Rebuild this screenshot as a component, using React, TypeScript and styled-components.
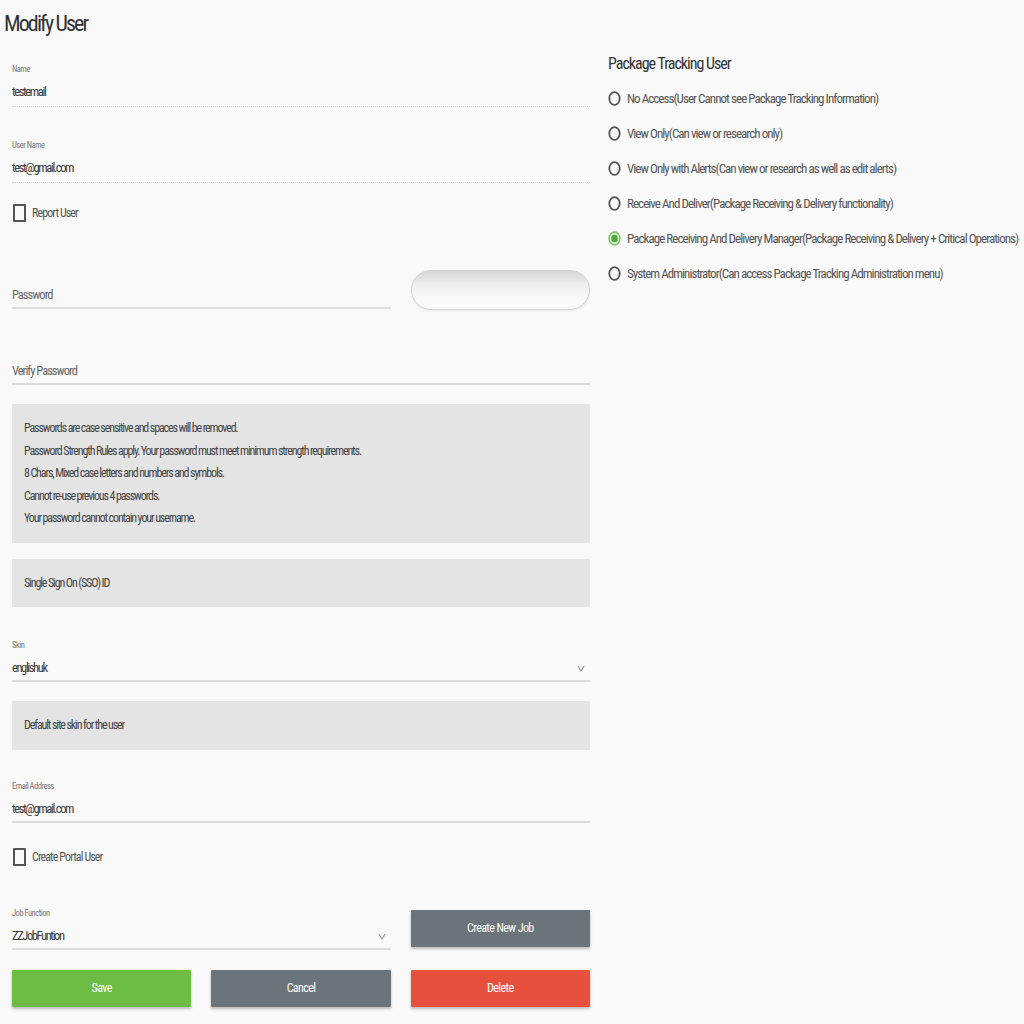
import React from "react";
import styled, { createGlobalStyle } from "styled-components";

const GlobalStyle = createGlobalStyle`
  html, body {
    margin: 0;
    padding: 0;
    background: #f9f9f9;
  }
  body {
    font-family: "Roboto Condensed", Roboto, "Liberation Sans", sans-serif;
    color: #444;
  }
`;

const Page = styled.div`
  width: 1024px;
  min-height: 1024px;
  background: #f9f9f9;
  box-sizing: border-box;
  overflow: hidden;
`;

const Title = styled.h1`
  margin: 0;
  padding: 9px 0 0 4px;
  font-size: 22px;
  line-height: 30px;
  font-weight: 400;
  letter-spacing: -1.9px;
  color: #333;
`;

const Columns = styled.div`
  display: flex;
  gap: 18px;
  padding-left: 12px;
`;

const LeftCol = styled.div`
  width: 578px;
  flex-shrink: 0;
  display: flex;
  flex-direction: column;
`;

const RightCol = styled.div`
  flex: 1;
  min-width: 0;
  padding-top: 15px;
`;

const Field = styled.div<{ $top: number }>`
  margin-top: ${(p) => p.$top}px;
`;

const Label = styled.div`
  font-size: 8.5px;
  line-height: 12px;
  color: #777;
  letter-spacing: -0.5px;
`;

const Value = styled.div<{ $thin?: boolean }>`
  position: relative;
  margin-top: 7px;
  font-size: 12.5px;
  line-height: 20px;
  letter-spacing: -1.4px;
  color: #3a3a3a;
  padding-bottom: ${(p) => (p.$thin ? 4 : 2)}px;
  border-bottom: ${(p) => (p.$thin ? "1px dotted #d6d6d6" : "2px solid #dcdcdc")};
`;

const Placeholder = styled.div`
  font-size: 12.5px;
  line-height: 20px;
  letter-spacing: -1px;
  color: #666;
  padding-bottom: 2px;
  border-bottom: 2px solid #dcdcdc;
`;

const Chevron = styled.svg`
  position: absolute;
  right: 5px;
  top: 7px;
`;

const CheckRow = styled.label<{ $top: number }>`
  display: flex;
  align-items: center;
  gap: 6px;
  margin-top: ${(p) => p.$top}px;
  height: 18px;
  font-size: 12px;
  letter-spacing: -0.9px;
  color: #555;
`;

const CheckBox = styled.span`
  display: inline-block;
  width: 9px;
  height: 14px;
  border: 2px solid #555;
  border-radius: 1px;
  margin-left: 1px;
`;

const Grid3 = styled.div<{ $top: number; $align?: string }>`
  display: grid;
  grid-template-columns: repeat(3, 1fr);
  column-gap: 20px;
  align-items: ${(p) => p.$align ?? "end"};
  margin-top: ${(p) => p.$top}px;
`;

const Span2 = styled.div`
  grid-column: span 2;
`;

const Pill = styled.div`
  height: 38px;
  border-radius: 20px;
  border: 1px solid #d2d2d2;
  background: linear-gradient(#d6d6d6 0%, #eeeeee 35%, #f8f8f8 70%, #fbfbfb 100%);
  box-shadow: 0 1px 2px rgba(0, 0, 0, 0.08);
  margin-bottom: -1px;
`;

const InfoBox = styled.div<{ $top: number; $pad: number }>`
  margin-top: ${(p) => p.$top}px;
  background: #e4e4e4;
  padding: ${(p) => p.$pad}px 12px;
  font-size: 12px;
  line-height: 22.5px;
  letter-spacing: -1.12px;
  color: #444;
`;

const Button = styled.button<{ $color: string }>`
  height: 37px;
  border: none;
  border-radius: 1px;
  background: ${(p) => p.$color};
  color: #fff;
  font-family: "Roboto Condensed", Roboto, sans-serif;
  font-size: 12px;
  letter-spacing: -0.6px;
  box-shadow: 0 2px 3px rgba(0, 0, 0, 0.25);
  cursor: pointer;
`;

const SectionTitle = styled.h2`
  margin: 0;
  font-size: 16px;
  line-height: 20px;
  font-weight: 400;
  letter-spacing: -1px;
  color: #333;
`;

const RadioList = styled.div`
  margin-top: 7px;
  display: flex;
  flex-direction: column;
`;

const RadioRow = styled.div`
  display: flex;
  align-items: center;
  gap: 6px;
  height: 35px;
  font-size: 13px;
  letter-spacing: -0.95px;
  color: #555;
  white-space: nowrap;
`;

const ChevronIcon = () => (
  <Chevron width="8" height="7" viewBox="0 0 8 7">
    <polyline points="1,1 4,6 7,1" fill="none" stroke="#999" strokeWidth="1.2" />
  </Chevron>
);

const RadioIcon = ({ checked }: { checked?: boolean }) =>
  checked ? (
    <svg width="13" height="15" viewBox="0 0 13 15">
      <ellipse cx="6.5" cy="7.5" rx="5.5" ry="6.5" fill="#d8eecf" stroke="#79c35d" strokeWidth="1.4" />
      <ellipse cx="6.5" cy="7.5" rx="3.2" ry="3.8" fill="#4fa83a" />
    </svg>
  ) : (
    <svg width="13" height="15" viewBox="0 0 13 15">
      <ellipse cx="6.5" cy="7.5" rx="5.2" ry="6.3" fill="none" stroke="#555" strokeWidth="1.8" />
    </svg>
  );

const roles = [
  "No Access(User Cannot see Package Tracking Information)",
  "View Only(Can view or research only)",
  "View Only with Alerts(Can view or research as well as edit alerts)",
  "Receive And Deliver(Package Receiving & Delivery functionality)",
  "Package Receiving And Delivery Manager(Package Receiving & Delivery + Critical Operations)",
  "System Administrator(Can access Package Tracking Administration menu)",
];

const passwordRules = [
  "Passwords are case sensitive and spaces will be removed.",
  "Password Strength Rules apply. Your password must meet minimum strength requirements.",
  "8 Chars, Mixed case letters and numbers and symbols.",
  "Cannot re-use previous 4 passwords.",
  "Your password cannot contain your username.",
];

export default function App() {
  return (
    <Page>
      <GlobalStyle />
      <Title>Modify User</Title>
      <Columns>
        <LeftCol>
          <Field $top={24}>
            <Label>Name</Label>
            <Value $thin>testemail</Value>
          </Field>
          <Field $top={32}>
            <Label>User Name</Label>
            <Value $thin>test@gmail.com</Value>
          </Field>
          <CheckRow $top={21}>
            <CheckBox />
            Report User
          </CheckRow>

          <Grid3 $top={48}>
            <Span2>
              <Placeholder>Password</Placeholder>
            </Span2>
            <Pill />
          </Grid3>
          <Field $top={52}>
            <Placeholder>Verify Password</Placeholder>
          </Field>

          <InfoBox $top={19} $pad={13}>
            {passwordRules.map((r) => (
              <div key={r}>{r}</div>
            ))}
          </InfoBox>
          <InfoBox $top={16} $pad={13}>
            Single Sign On (SSO) ID
          </InfoBox>

          <Field $top={32}>
            <Label>Skin</Label>
            <Value>
              englishuk
              <ChevronIcon />
            </Value>
          </Field>
          <InfoBox $top={19} $pad={13}>
            Default site skin for the user
          </InfoBox>

          <Field $top={30}>
            <Label>Email Address</Label>
            <Value>test@gmail.com</Value>
          </Field>
          <CheckRow $top={25}>
            <CheckBox />
            Create Portal User
          </CheckRow>

          <Grid3 $top={41} $align="center">
            <Span2>
              <Label>Job Function</Label>
              <Value>
                ZZJobFuntion
                <ChevronIcon />
              </Value>
            </Span2>
            <Button $color="#6b737b">Create New Job</Button>
          </Grid3>
          <Grid3 $top={20}>
            <Button $color="#6dbd45">Save</Button>
            <Button $color="#6b737b">Cancel</Button>
            <Button $color="#e8503e">Delete</Button>
          </Grid3>
        </LeftCol>

        <RightCol>
          <SectionTitle>Package Tracking User</SectionTitle>
          <RadioList>
            {roles.map((r, i) => (
              <RadioRow key={r}>
                <RadioIcon checked={i === 4} />
                {r}
              </RadioRow>
            ))}
          </RadioList>
        </RightCol>
      </Columns>
    </Page>
  );
}
